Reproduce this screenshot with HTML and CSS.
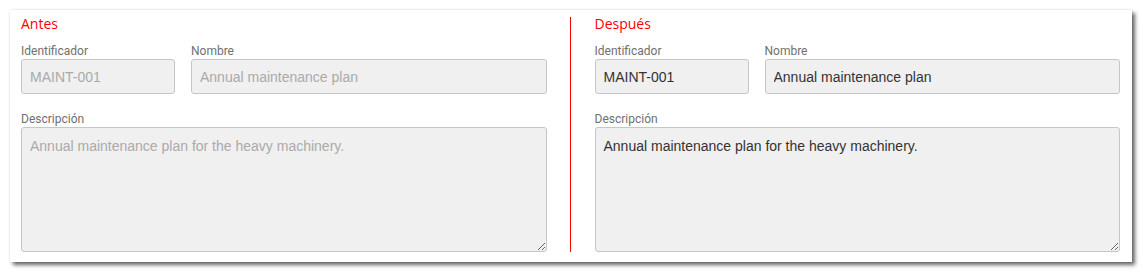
FILE: index.html
```html
<!DOCTYPE html>
<html lang="es">
<head>
    <meta charset="UTF-8">
    <meta name="viewport" content="width=device-width, initial-scale=1.0">
    <title>Antes / Después</title>
    <link rel="stylesheet" href="styles.css">
</head>
<body>

    <div class="card">
        <!-- Antes -->
        <div class="panel">
            <h3 class="panel-title">Antes</h3>
            <div class="row">
                <div class="field field-id">
                    <label>Identificador</label>
                    <input type="text" class="disabled" value="MAINT-001" disabled>
                </div>
                <div class="field field-name">
                    <label>Nombre</label>
                    <input type="text" class="disabled" value="Annual maintenance plan" disabled>
                </div>
            </div>
            <div class="field field-desc">
                <label>Descripción</label>
                <textarea class="disabled" disabled>Annual maintenance plan for the heavy machinery.</textarea>
            </div>
        </div>

        <div class="divider"></div>

        <!-- Después -->
        <div class="panel">
            <h3 class="panel-title">Después</h3>
            <div class="row">
                <div class="field field-id">
                    <label>Identificador</label>
                    <input type="text" value="MAINT-001">
                </div>
                <div class="field field-name">
                    <label>Nombre</label>
                    <input type="text" value="Annual maintenance plan">
                </div>
            </div>
            <div class="field field-desc">
                <label>Descripción</label>
                <textarea>Annual maintenance plan for the heavy machinery.</textarea>
            </div>
        </div>
    </div>

</body>
</html>
```

FILE: styles.css
```css
body {
    margin: 0;
    padding: 0 0 11px 0;
    background-color: #fff;
    font-family: Roboto, 'Liberation Sans', Arial, sans-serif;
}

.card {
    margin: 10px 0 0 10px;
    width: 1122px;
    height: 252px;
    box-sizing: border-box;
    padding: 5px 12px 10px 11px;
    background-color: #fff;
    display: flex;
    box-shadow: 3px 3px 4px rgba(0, 0, 0, 0.6), 0 0 2px rgba(0, 0, 0, 0.12);
}

.panel {
    flex: 1;
    min-width: 0;
}

.divider {
    width: 1px;
    background-color: #f00;
    margin: 2px 24px 0 23px;
}

.panel-title {
    margin: 0 0 12px 0;
    font-family: 'Open Sans', 'Noto Sans', sans-serif;
    font-weight: normal;
    font-size: 14px;
    line-height: 17px;
    color: #f00;
}

.row {
    display: flex;
    gap: 16px;
    margin-bottom: 18px;
}

.field label {
    display: block;
    font-size: 12px;
    line-height: 14px;
    color: #707070;
    margin-bottom: 1px;
}

.field-id {
    width: 154px;
}

.field-name {
    flex: 1;
}

.field input, .field textarea {
    display: block;
    width: 100%;
    box-sizing: border-box;
    margin: 0;
    border: 1px solid #c6c6c6;
    border-radius: 3px;
    background-color: #f0f0f0;
    font-family: 'Liberation Sans', Arial, sans-serif;
    font-size: 14px;
    color: #333;
    outline: none;
}

.field input {
    height: 35px;
    padding: 0 8px;
}

.field textarea {
    height: 125px;
    padding: 8px 8px;
    line-height: 20px;
    resize: both;
}

.field .disabled {
    color: #aaa;
    -webkit-text-fill-color: #aaa;
    opacity: 1;
}
```
